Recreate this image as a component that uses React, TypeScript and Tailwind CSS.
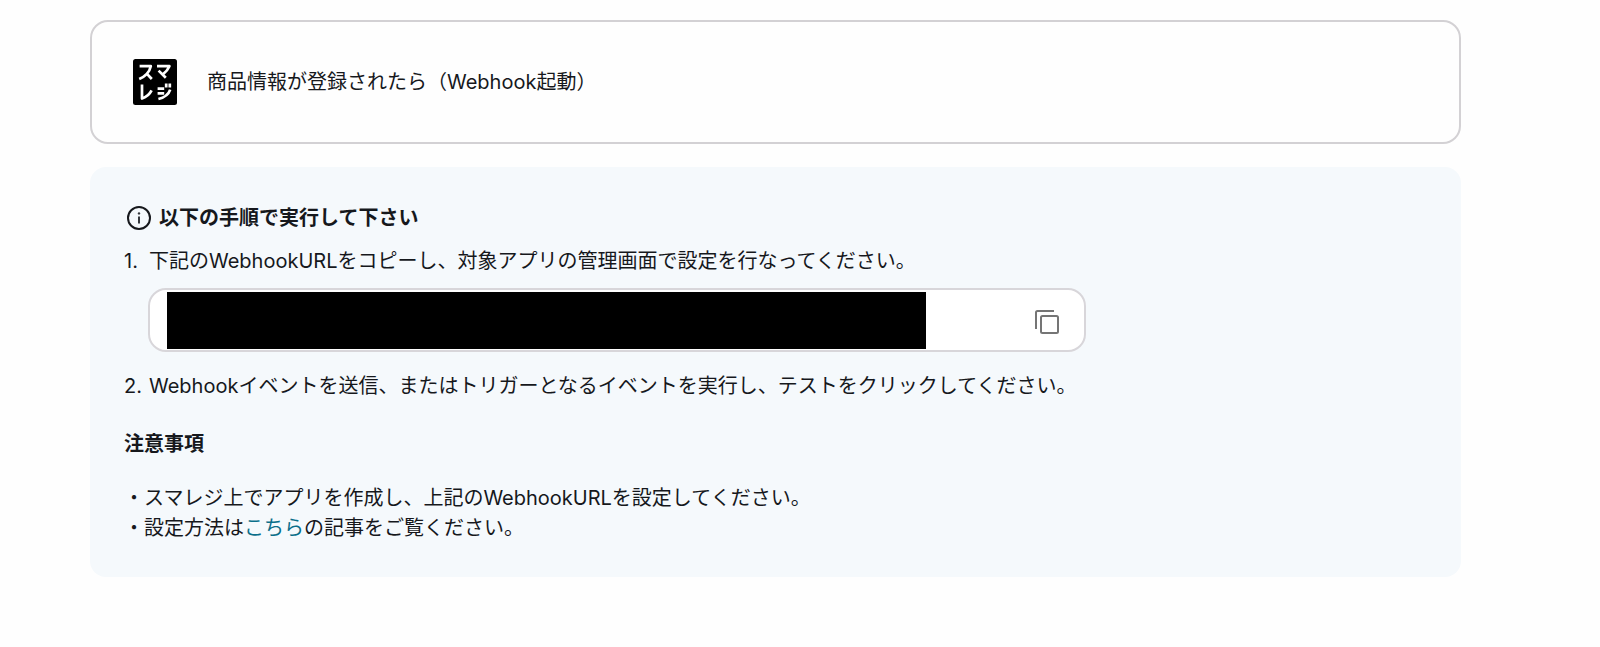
function SmaregiLogo() {
  return (
    <svg className="h-[46px] w-11 shrink-0" viewBox="0 0 44 46" role="img" aria-label="スマレジ">
      <rect width="44" height="46" rx="2.5" fill="#000" />
      <g fill="none" stroke="#fff" strokeWidth="2.7" strokeLinejoin="round">
        <path d="M6.6 7.2H17.8C16.6 12.6 12.6 17.2 6.2 20M13 13.8L18.8 20" />
        <path d="M24 7.2H36.4C35 10.6 32.4 13.4 29.6 15.6M25.6 11.6L32.8 18.8" />
        <path d="M9 25.4V39.6C13 38.2 16.6 35.4 18.6 31.4" />
        <path d="M24.6 29.6H31.2M24.6 34.4H31.2M25.4 40C31 38.6 35.6 35.6 37.2 30.6M33.2 24.6V28.6M36.8 24.6V28.6" />
      </g>
    </svg>
  );
}

function InfoIcon() {
  return (
    <svg className="size-6 shrink-0" viewBox="0 0 24 24" aria-hidden="true">
      <circle cx="12" cy="12" r="11" fill="none" stroke="currentColor" strokeWidth="2" />
      <path d="M12 10.6V17.4" stroke="#33363b" strokeWidth="2" />
      <circle cx="12" cy="7.4" r="1.2" fill="#33363b" />
    </svg>
  );
}

function CopyIcon() {
  return (
    <svg className="size-6" viewBox="0 0 24 24" fill="none" stroke="#757575" strokeWidth="2" aria-hidden="true">
      <rect x="6" y="6" width="17" height="17" rx="1.5" />
      <path d="M1 19V2.5A1.5 1.5 0 0 1 2.5 1H19" />
    </svg>
  );
}

export default function App() {
  return (
    <main className="min-h-screen bg-[#fefefe] pt-5 pr-[139px] pb-10 pl-[90px] font-[Inter,'Noto_Sans_CJK_JP',sans-serif] text-[20px] leading-[30px] text-[#16181c]">
      <section className="flex items-center gap-[30px] rounded-[18px] border-2 border-[#d3d1d4] px-[41px] py-[37px]">
        <SmaregiLogo />
        <h1>商品情報が登録されたら（Webhook起動）</h1>
      </section>

      <section className="mt-[23px] rounded-[16px] bg-[#f5f9fc] px-[34px] pt-9 pb-[34px]">
        <h2 className="flex items-center gap-2 pl-[3px] font-bold">
          <InfoIcon />
          以下の手順で実行して下さい
        </h2>
        <ol className="mt-[13px]">
          <li>
            <label htmlFor="webhook-url" className="flex">
              <span className="w-[25px] shrink-0">1.</span>
              下記のWebhookURLをコピーし、対象アプリの管理画面で設定を行なってください。
            </label>
            <div className="mt-3 ml-6 flex h-16 max-w-[938px] items-center justify-between rounded-[18px] border-2 border-[#d8d6da] bg-white pr-[25px] pl-[17px]">
              <input id="webhook-url" type="text" readOnly className="h-[57px] w-[759px] min-w-0 bg-black text-black outline-none" />
              <button type="button" aria-label="コピー" className="mt-1">
                <CopyIcon />
              </button>
            </div>
          </li>
          <li className="mt-[19px] flex">
            <span className="w-[25px] shrink-0">2.</span>
            Webhookイベントを送信、またはトリガーとなるイベントを実行し、テストをクリックしてください。
          </li>
        </ol>
        <h3 className="mt-7 font-bold">注意事項</h3>
        <ul className="mt-6">
          <li>・スマレジ上でアプリを作成し、上記のWebhookURLを設定してください。</li>
          <li>
            ・設定方法は
            <a href="#guide" className="text-[#0b6f8a]">
              こちら
            </a>
            の記事をご覧ください。
          </li>
        </ul>
      </section>
    </main>
  );
}
